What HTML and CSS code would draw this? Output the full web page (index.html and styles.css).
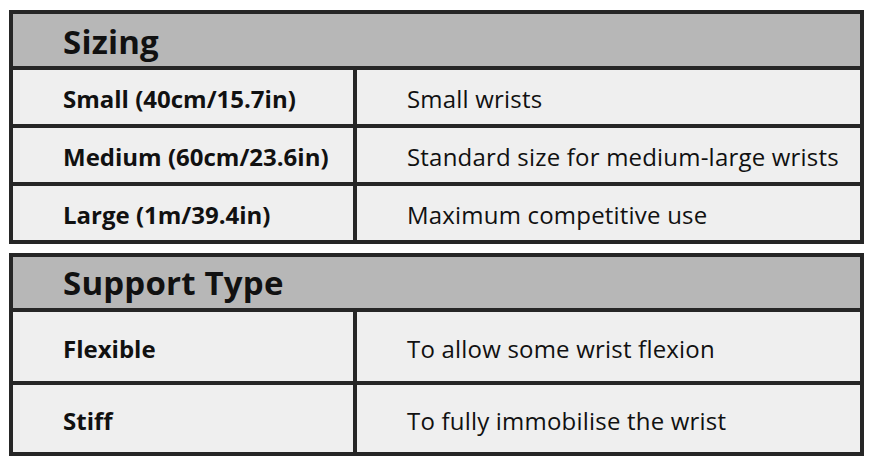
FILE: index.html
```html
<!DOCTYPE html>
<html>
<head>
<meta charset="utf-8">
<link rel="stylesheet" href="styles.css">
</head>
<body>
<div class="page">
  <section class="spec spec-sizing">
    <div class="spec-head">Sizing</div>
    <div class="spec-row">
      <div class="cell cell-key">Small (40cm/15.7in)</div>
      <div class="cell cell-val">Small wrists</div>
    </div>
    <div class="spec-row">
      <div class="cell cell-key">Medium (60cm/23.6in)</div>
      <div class="cell cell-val">Standard size for medium-large wrists</div>
    </div>
    <div class="spec-row">
      <div class="cell cell-key">Large (1m/39.4in)</div>
      <div class="cell cell-val">Maximum competitive use</div>
    </div>
  </section>
  <section class="spec spec-support">
    <div class="spec-head">Support Type</div>
    <div class="spec-row tall">
      <div class="cell cell-key">Flexible</div>
      <div class="cell cell-val">To allow some wrist flexion</div>
    </div>
    <div class="spec-row tall2">
      <div class="cell cell-key">Stiff</div>
      <div class="cell cell-val">To fully immobilise the wrist</div>
    </div>
  </section>
</div>
</body>
</html>
```
FILE: styles.css
```css
html, body {
  margin: 0;
  padding: 0;
  background: #ffffff;
}
body {
  font-family: "Open Sans", "Liberation Sans", sans-serif;
  color: #111111;
}
.page {
  padding: 10px 0 0 9px;
  width: 855px;
  display: flex;
  flex-direction: column;
  gap: 9px;
}
.spec {
  border: 4px solid #262626;
  background: #efefef;
}
.spec-head {
  background: #b7b7b7;
  box-sizing: border-box;
  padding: 3px 0 0 50px;
  display: flex;
  align-items: center;
  font-size: 33px;
  letter-spacing: 0.2px;
  font-weight: 700;
  border-bottom: 4px solid #262626;
  height: 56px;
}
.spec-support .spec-head {
  height: 55px;
  padding-top: 0;
}
.spec-row {
  display: grid;
  grid-template-columns: 344px 1fr;
  height: 58px;
  border-bottom: 4px solid #262626;
  box-sizing: border-box;
}
.spec-row:last-child {
  border-bottom: none;
  height: 54px;
}
.spec-row.tall {
  height: 73px;
}
.spec-row.tall2:last-child {
  height: 67px;
}
.cell {
  display: flex;
  align-items: center;
  padding: 3px 0 0 50px;
  font-size: 24px;
}
.cell-key {
  font-weight: 700;
  border-right: 4px solid #262626;
}
.cell-val {
  font-weight: 400;
  letter-spacing: 0.2px;
}
```
